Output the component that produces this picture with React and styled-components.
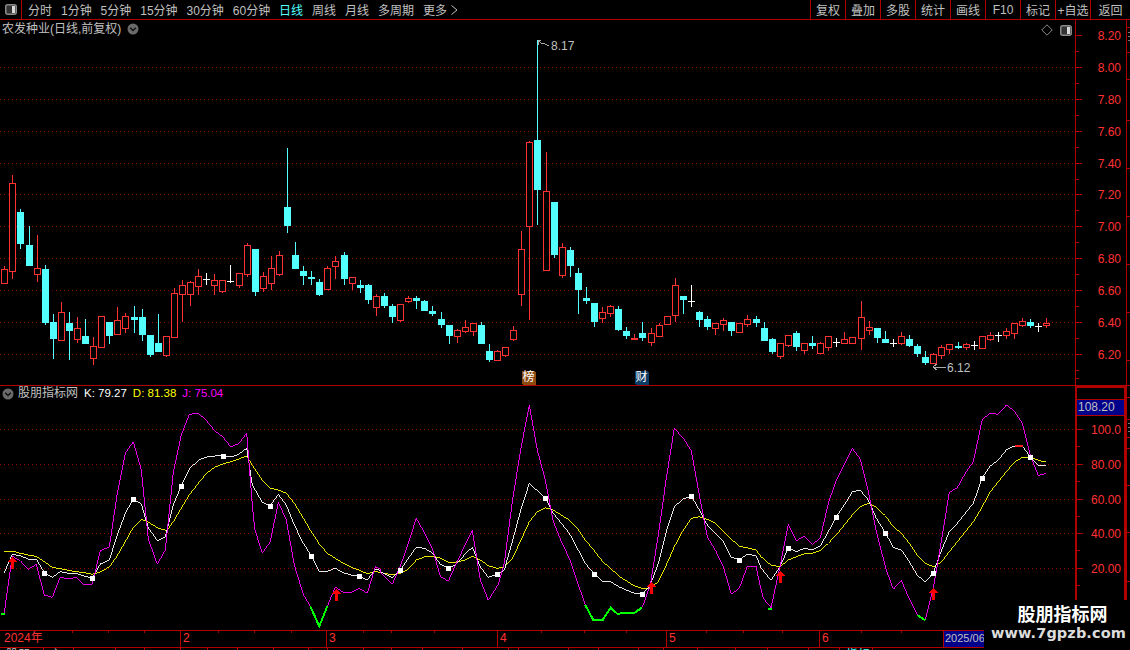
import React from 'react';
import styled, { createGlobalStyle } from 'styled-components';

const RED_LINE = '#b00000';
const RED_DOT = '#940000';
const RED_TEXT = '#ff3232';
const CYAN = '#54ffff';
const GREY = '#c0c0c0';

const Global = createGlobalStyle`
  html, body { margin: 0; padding: 0; background: #000; overflow: hidden; }
`;
const SANS = `"Liberation Sans", Arial, sans-serif`;
const CJK = `"Liberation Sans", "Noto Sans CJK SC", sans-serif`;

const Page = styled.div`
  position: relative; width: 1130px; height: 650px; overflow: hidden;
  background: #000; display: flex; flex-direction: column; font-family: ${CJK}; color: ${GREY};
`;
const TopBar = styled.header`
  height: 19px; flex: none; display: flex; align-items: stretch;
  border-bottom: 1px solid ${RED_LINE};
`;
const LayoutCell = styled.div`
  width: 21px; flex: none; display: flex; align-items: center; justify-content: center;
  border-right: 1px solid ${RED_LINE};
`;
const Tabs = styled.nav`
  flex: 1; display: flex; align-items: center; gap: 8.95px; padding-left: 6px; font-size: 12px;
`;
const Tab = styled.span`
  color: ${p => (p.$active ? CYAN : GREY)}; white-space: nowrap;
`;
const ToolCell = styled.div`
  width: 35px; flex: none; box-sizing: border-box; display: flex; align-items: center; justify-content: center;
  border-left: 1px solid ${RED_LINE}; font-size: 12px; white-space: nowrap;
  &:last-child { width: 40px; }
`;
const Row = styled.section`
  display: flex; flex: none; height: ${p => p.$h}px;
  ${p => p.$ruled && `border-top: 1px solid ${RED_LINE};`}
`;
const Plot = styled.div`
  position: relative; width: 1075px; flex: none;
  svg { display: block; }
`;
const Axis = styled.div`
  position: relative; width: 51px; flex: none; box-sizing: border-box;
  border-left: ${p => (p.$thick ? 2 : 1)}px solid ${RED_LINE};
  ${p => p.$thick && `border-right: 2px solid ${RED_LINE}; border-top: 2px solid ${RED_LINE};`}
`;
const AxisLabel = styled.span`
  position: absolute; right: ${p => (p.$thick ? 3 : 5)}px; top: ${p => p.$y}px; transform: translateY(-50%);
  font: 12px ${SANS}; color: ${RED_TEXT}; line-height: 14px;
`;
const AxisTick = styled.i`
  position: absolute; left: 0; top: ${p => p.$y}px; height: 1px;
  width: ${p => (p.$major ? 6 : 3)}px; background: ${RED_LINE};
`;
const ValueBox = styled.div`
  position: absolute; left: 0; right: 0; top: 11px; height: 17px; box-sizing: border-box;
  background: #00008a; border-top: 1px solid ${RED_LINE}; border-bottom: 1px solid ${RED_LINE};
  font: 12px/15px ${SANS}; color: ${GREY}; padding-left: 1px;
`;
const EdgeStrip = styled.div`
  position: relative; flex: 1; border-left: 1px solid ${RED_LINE};
`;
const EdgeTick = styled.i`
  position: absolute; left: 0; right: 0; top: ${p => p.$y}px; height: 1px; background: ${RED_LINE};
`;
const EdgeGlyph = styled.i`
  position: absolute; left: 1px; right: 0; top: ${p => p.$y}px; height: ${p => p.$h}px; background: #777;
`;
const PaneTitle = styled.div`
  position: absolute; left: 2px; top: 1px; display: flex; align-items: center; gap: 6px;
  font-size: 12px; line-height: 16px; color: ${GREY};
`;
const IndTitle = styled.div`
  position: absolute; left: 2px; top: 0; display: flex; align-items: center;
  font-size: 12px; line-height: 15px;
`;
const IndName = styled.span`margin: 0 6px 0 4px; color: ${GREY};`;
const IndValue = styled.span`margin-right: 6px; font-size: 11.5px; color: ${p => p.$c}; white-space: nowrap;`;
const PaneTools = styled.div`
  position: absolute; right: 3px; top: 4px; display: flex; align-items: center; gap: 7px;
`;
const Badge = styled.span`
  position: absolute; left: ${p => p.$x}px; top: 351px; width: 13px; height: 13px;
  background: ${p => p.$bg}; color: #fff; font-size: 12px; line-height: 13px; text-align: center;
  box-shadow: 1px 1px 0 ${p => p.$bg};
`;
const TimeAxis = styled.div`
  display: flex; flex: none; height: 16px; box-sizing: content-box;
  border-top: 1px solid ${RED_LINE}; border-bottom: 1px solid ${RED_LINE};
`;
const TimeSection = styled.div`
  position: relative; flex: none; width: ${p => p.$w}px; box-sizing: border-box; padding-left: ${p => (p.$first ? 4 : 2)}px;
  ${p => !p.$first && `border-left: 1px solid ${RED_LINE};`}
  font: 12px/15px ${CJK}; color: ${RED_TEXT};
`;
const TimeTick = styled.i`
  position: absolute; top: 0; left: ${p => p.$x}px; width: 1px; height: 2px; background: ${RED_LINE};
`;
const CursorDate = styled.div`
  flex: none; width: 41px; box-sizing: border-box; background: #00008a; color: ${GREY}; border-left: 1px solid ${RED_LINE};
  font: 11px/15px ${SANS}; padding-left: 1px; white-space: nowrap; overflow: hidden;
`;
const Footer = styled.div`
  flex: 1; display: flex; overflow: hidden;
`;
const FootCell = styled.div`
  flex: none; width: ${p => p.$w}px; box-sizing: border-box; border-left: 1px solid ${RED_LINE};
  padding-left: ${p => p.$pad || 6}px; font-size: 12px; line-height: 14px; margin-top: 0;
  color: ${p => p.$c || GREY}; white-space: nowrap;
  &:first-child { border-left: 0; }
`;
const Watermark = styled.aside`
  position: absolute; left: 984px; top: 600px; right: 0; bottom: 0; background: #000;
  display: flex; flex-direction: column; align-items: center; box-sizing: border-box;
`;
const MarkName = styled.div`
  font: bold 18px/26px "Noto Sans CJK SC", sans-serif; color: #fff; padding-left: 11px; height: 25px;
`;
const MarkUrl = styled.div`
  font: bold 14.5px/17px "DejaVu Sans", sans-serif; color: #dcdcdc; letter-spacing: 0.1px; white-space: nowrap;
  padding-left: 3px;
`;

/* ---------- drawn icons ---------- */
const WindowIcon = () => (
  <svg width="12" height="11" viewBox="0 0 12 11">
    <rect x="0.75" y="0.75" width="10.5" height="9.5" rx="2" fill="#333" stroke="#8a8a8a" strokeWidth="1.5" />
    <rect x="7" y="2" width="3" height="7" fill="#d8d8d8" />
  </svg>
);
const Chevron = () => (
  <svg width="12" height="12" viewBox="0 0 12 12">
    <circle cx="6" cy="6" r="5.5" fill="#6a6a6a" />
    <path d="M3.2 4.8 L6 7.6 L8.8 4.8" fill="none" stroke="#111" strokeWidth="1.4" />
  </svg>
);
const Diamond = () => (
  <svg width="12" height="12" viewBox="0 0 12 12">
    <path d="M6 .8 L11.2 6 L6 11.2 L.8 6 Z" fill="none" stroke="#8a8a8a" />
  </svg>
);
const MoreArrow = () => (
  <svg width="7" height="10" viewBox="0 0 7 10" style={{ marginLeft: 4 }}>
    <path d="M.5 .5 L6 5 L.5 9.5" fill="none" stroke={GREY} />
  </svg>
);

/* ---------- price data: colour, high, body top, body bottom, low (zoom px; 3x + section origin) ---------- */
const sections = [
  [160, `r318,328,368,372 r45,70,334,357 c148,156,252,267 c198,255,318,318 r225,325,341,365 c316,327,489,495 c462,486,537,597 r427,457,539,539 c457,489,513,600 r472,505,536,549 c477,528,552,552 r531,559,593,615 r469,469,560,560 c486,486,528,552 r441,481,521,521 r459,469,503,519 c438,471,480,519 c447,471,525,543 c525,525,585,591 c462,549,576,576 r528,529,584,591 r384,400,530,530 r361,376,401,487 r363,367,401,438 r327,349,377,405 w339,357,357,372 r342,361,374,405 r361,361,392,399 w315,362,362,366 r340,340,374,384 r250,256,341,351 c267,267,396,408 r336,349,383,396 r288,325,368,390 r274,286,341,348`],
  [130, `c54,231,288,309 c336,375,417,417 c408,423,438,465 c423,441,447,465 c447,456,495,498 r408,415,476,480 r378,394,407,447 c366,375,447,465 r442,442,458,480 c450,465,474,489 c462,465,510,522 r492,499,530,558 c489,498,528,534 c522,528,561,579 r523,523,569,576 r498,504,512,519 c498,504,513,537 c510,513,543,543 c528,543,552,558 c546,567,585,594 c585,585,618,642 r597,601,617,639 r570,592,602,609 r579,580,602,618 c576,585,642,642 c642,663,690,696 r660,664,689,689 r652,652,674,681 r588,601,627,633 r303,358,491,528 r33,37,287,570 c-270,30,180,285 r66,184,419,419 c216,216,375,384 r340,351,435,445`],
  [260, `c-39,-30,18,51 c24,39,90,162 c81,114,123,132 c129,129,186,201 r141,157,174,189 r135,139,158,171 c138,147,210,213 c201,213,228,237 r222,235,238,238 c186,219,234,243 r204,220,245,258 r189,196,227,227 r168,169,191,195 r54,76,164,186 c108,108,120,162 w75,124,124,138 c153,156,180,201 c168,177,201,210 r190,190,203,225 r174,180,191,213 c186,186,213,228 r189,190,216,219 r165,178,191,201 c168,177,189,201 c186,204,243,243 c234,237,276,282 r250,250,287,297 r226,226,254,261 c213,219,261,273 r250,250,269,282 c228,249,258,267 r246,250,278,282 r229,229,260,273 w234,246,246,258`],
  [290, `r127,148,160,160 r140,140,160,160 r33,82,145,181 r93,112,121,136 c114,114,144,159 c124,148,159,159 w148,158,158,168 r126,139,160,166 c136,148,167,171 c162,168,193,200 c184,201,218,224 r190,193,220,222 r166,170,196,206 r162,163,178,192 c155,169,173,178 r158,163,171,180 w154,164,164,176 r139,139,173,173 r127,136,147,152 w125,134,134,152 r115,122,135,147 r99,100,130,146 r85,92,106,110 c88,97,109,114 w98,108,108,122 r85,99,106,114`],
];
const candles = sections.flatMap(([oy, s]) =>
  s.split(' ').map(t => {
    const [hi, top, bot, lo] = t.slice(1).split(',').map(n => Math.round(oy + Number(n) / 3));
    return { k: t[0], hi, top, bot, lo };
  })
).map((c, i) => ({ ...c, x: Math.round(4.3 + i * 8.078) }));

const COLORS = { r: RED_TEXT, c: CYAN, w: '#fff' };
const Candle = ({ c }) => {
  const col = COLORS[c.k];
  const cx = c.x + 0.5;
  if (c.k === 'w') {
    return (
      <g stroke={col}>
        <line x1={cx} x2={cx} y1={c.hi} y2={c.lo + 1} />
        <line x1={c.x - 3} x2={c.x + 4} y1={c.top + 0.5} y2={c.top + 0.5} />
      </g>
    );
  }
  const h = Math.max(c.bot - c.top, 1);
  return (
    <g>
      {c.hi < c.top && <line x1={cx} x2={cx} y1={c.hi} y2={c.top} stroke={col} />}
      {c.lo > c.bot && <line x1={cx} x2={cx} y1={c.bot} y2={c.lo} stroke={col} />}
      {c.k === 'c'
        ? <rect x={c.x - 3} y={c.top} width="7" height={h} fill={col} />
        : <rect x={c.x - 2.5} y={c.top + 0.5} width="6" height={h} fill="#000" stroke={col} />}
    </g>
  );
};

/* ---------- KDJ data: zoom px per crop ---------- */
const zp = (s, ox) => s.trim().split(/\s+/).map(t => {
  const [x, y] = t.split(',').map(Number);
  return `${(ox + x / 3).toFixed(1)},${(385 + y / 3).toFixed(1)}`;
});
const J = [
  ...zp(`13,683 19,640 37,514 61,527 85,553 109,538 133,630 157,637 181,576 205,582 229,577 253,600 277,597 301,497 328,486 352,325 376,205 400,170 424,255 445,462 472,538 496,495 520,262 544,150 568,88 596,85 620,108 644,137 668,155 692,185 716,176 740,145 757,360 764,432 787,505 811,470 835,352 859,405 883,540 910,628 931,664 958,724 982,664 1006,606 1030,622 1054,622 1078,610 1102,625 1126,545 1140,552`, 0),
  ...zp(`0,560 37,598 61,544 85,475 109,400 133,442 157,490 181,574 205,589 229,535 253,485 277,436 301,585 325,646 355,598 373,535 397,350 421,200 448,60 472,195 496,285 520,410 544,470 568,520 592,590 616,660 640,705 668,705 692,668 712,686 740,684 764,683 787,667 811,600 835,450 859,280 883,130 910,160 934,197 958,330 982,455 1006,495 1030,545 1054,627 1078,610 1102,544 1128,544 1140,600`, 380),
  ...zp(`0,600 10,640 33,668 60,545 85,418 109,467 133,454 157,478 181,460 205,355 229,285 253,238 277,190 301,222 325,320 349,440 379,555 400,613 424,586 448,642 472,690 496,706 520,610 544,470 568,322 592,308 616,265 640,230 667,103 691,85 715,88 739,60 763,78 787,115 811,212 835,272 857,265`, 760),
].join(' ');
const K = [
  ...zp(`13,563 37,508 61,512 85,522 109,522 133,563 157,577 181,560 205,565 229,565 253,574 277,579 301,537 328,525 352,450 376,385 400,342 424,357 445,428 472,467 496,456 520,360 544,302 568,252 596,225 620,216 644,213 668,212 692,216 716,208 740,190 757,300 787,352 811,362 835,328 859,360 883,420 910,475 934,512 958,559 982,559 1006,550 1030,563 1054,570 1078,572 1102,586 1126,552 1140,556`, 0),
  ...zp(`0,560 37,578 61,555 85,520 109,487 133,490 157,503 181,538 205,549 229,538 253,510 277,487 301,545 325,577 352,567 373,555 397,470 421,380 448,295 472,317 496,338 520,385 544,415 568,445 592,490 616,535 643,567 668,590 692,590 716,605 740,616 764,625 787,627 811,600 835,535 859,440 883,365 910,342 934,333 958,375 982,420 1006,445 1030,470 1054,517 1078,524 1102,508 1128,512 1140,540`, 380),
  ...zp(`0,545 33,586 60,545 85,488 109,500 133,490 157,495 181,483 205,440 229,396 253,360 277,320 301,316 325,345 349,400 376,443 400,487 424,495 448,530 472,570 496,592 520,563 544,497 568,440 592,415 616,385 640,355 667,278 691,243 715,225 739,195 763,183 787,183 811,215 835,242 857,242`, 760),
].join(' ');
const D = [
  ...zp(`13,498 43,499 61,505 85,510 109,514 133,530 157,547 181,551 205,556 229,560 253,563 277,568 301,561 328,546 352,512 376,470 400,427 424,403 445,411 472,428 500,437 520,410 544,370 568,330 596,293 620,265 644,247 668,237 692,230 716,222 740,213 757,240 787,285 811,310 835,315 859,325 883,355 910,400 934,440 958,477 982,505 1006,520 1030,535 1054,547 1078,556 1102,566 1126,560 1140,562`, 0),
  ...zp(`0,562 37,570 61,565 85,553 109,525 133,516 157,514 181,519 205,532 229,531 253,526 277,514 301,525 325,542 352,550 373,547 397,520 421,470 448,410 472,380 496,368 520,375 544,390 568,405 592,430 616,465 643,497 668,530 692,550 716,573 740,588 764,603 787,610 811,610 835,590 859,540 883,485 910,435 934,400 958,395 982,403 1006,415 1030,440 1054,462 1078,484 1102,488 1128,495 1140,510`, 380),
  ...zp(`0,512 33,541 60,545 85,525 109,515 133,507 157,505 181,497 205,475 229,450 253,420 277,390 301,365 325,355 349,367 376,392 400,425 424,445 448,475 472,510 496,535 520,545 544,532 568,500 592,470 616,440 640,410 667,365 691,320 715,290 739,260 763,232 787,217 811,217 835,226 857,231`, 760),
].join(' ');
const greens = [
  zp(`2,687 14,686`, 0),
  zp(`931,664 958,724 982,664`, 0),
  zp(`616,660 640,705 668,705 692,668 712,686 740,684 764,683 787,667`, 380),
  zp(`24,672 36,672`, 760),
  zp(`472,690 496,706`, 760),
].map(a => a.join(' '));
const squares = [
  ...[[133,563],[276,579],[400,342],[544,302],[668,212],[811,362],[934,512],[1078,572]].map(([x,y]) => [x/3, 385+y/3]),
  ...[[61,555],[205,549],[352,567],[496,338],[643,567],[787,627],[934,333],[1078,524]].map(([x,y]) => [380+x/3, 385+y/3]),
  ...[[85,488],[229,396],[376,443],[519,563],[667,278],[811,215]].map(([x,y]) => [760+x/3, 385+y/3]),
];
const arrows = [[12.5,557],[336.5,589],[651.5,582],[780.5,571],[933.5,588]];

const priceLevels = ['8.20','8.00','7.80','7.60','7.40','7.20','7.00','6.80','6.60','6.40','6.20'];
const priceY = [35,67,99,131,163,194,226,258,290,322,354];
const kdjLevels = [['100.0',429],['80.00',464],['60.00',499],['40.00',533],['20.00',568]];

const tools = ['复权','叠加','多股','统计','画线','F10','标记','+自选','返回'];
const tabs = ['分时','1分钟','5分钟','15分钟','30分钟','60分钟','日线','周线','月线','多周期'];
const months = [
  ['2024年', 180, [72,108,144]], ['2', 146, [37,73,110]], ['3', 171, [36,64,107]],
  ['4', 169, [43,86,128]], ['5', 153, [39,76,115]], ['6', 124, [41,81]],
];
const footCells = [[43,'股朋',GREY],[30,'主',GREY],[42],[29],[36],[27],[30],[36],[35],[19],[36],[28],[31],[40],[46],[10],[50],[30],[40],[25],[34],[38],[32],[41],[31,'',GREY],[33,'指标',CYAN],[258]];

const App = () => (
  <Page>
    <Global />
    <TopBar>
      <LayoutCell><WindowIcon /></LayoutCell>
      <Tabs>
        {tabs.map(t => <Tab key={t} $active={t === '日线'}>{t}</Tab>)}
        <Tab>更多<MoreArrow /></Tab>
      </Tabs>
      {tools.map(t => <ToolCell key={t}>{t}</ToolCell>)}
    </TopBar>

    <Row $h={365}>
      <Plot>
        <svg width="1075" height="365" viewBox="0 20 1075 365" shapeRendering="crispEdges">
          {priceY.slice(1).map(y => (
            <line key={y} x1="0" x2="1075" y1={y + 0.5} y2={y + 0.5} stroke={RED_DOT} strokeDasharray="1 3" shapeRendering="auto" />
          ))}
          {candles.map((c, i) => <Candle key={i} c={c} />)}
          <g stroke="#aaa" fill="none">
            <path d="M538 45 V40 H541 M538 40 L541 43 M541 43 L545 44 L549 46" />
            <path d="M933 367 H946 M933 367 L937 364 M933 367 L937 370" />
          </g>
          <g fontFamily="Liberation Sans" fontSize="12" fill={GREY} shapeRendering="auto">
            <text x="551" y="50">8.17</text>
            <text x="947" y="372">6.12</text>
          </g>
        </svg>
        <PaneTitle>
          <span>农发种业(日线,前复权)</span>
          <Chevron />
        </PaneTitle>
        <PaneTools>
          <Diamond />
          <WindowIcon />
        </PaneTools>
        <Badge $x={522} $bg="#8a4a10">榜</Badge>
        <Badge $x={635} $bg="#0c3c64">财</Badge>
      </Plot>
      <Axis>
        {priceY.map((y, i) => (
          <React.Fragment key={y}>
            <AxisTick $major $y={y - 20} />
            <AxisTick $y={y - 4} />
            <AxisLabel $y={y - 19}>{priceLevels[i]}</AxisLabel>
          </React.Fragment>
        ))}
        <AxisTick $y={358} />
      </Axis>
      <EdgeStrip>
        {[7, 32, 59, 100, 148, 196, 244, 292, 340].map(y => <EdgeTick key={y} $y={y} />)}
        <EdgeGlyph $y={12} $h={1} />
        <EdgeGlyph $y={16} $h={1} />
        <EdgeGlyph $y={20} $h={1} />
      </EdgeStrip>
    </Row>

    <Row $h={244} $ruled>
      <Plot>
        <svg width="1075" height="244" viewBox="0 386 1075 244" shapeRendering="crispEdges">
          {kdjLevels.map(([, y]) => (
            <line key={y} x1="0" x2="1075" y1={y + 0.5} y2={y + 0.5} stroke={RED_DOT} strokeDasharray="1 3" shapeRendering="auto" />
          ))}
          <polyline points={D} fill="none" stroke="#ffff00" strokeWidth="0.9" />
          <polyline points={K} fill="none" stroke="#fff" strokeWidth="0.9" />
          <polyline points={J} fill="none" stroke="#ff00ff" strokeWidth="0.9" />
          {greens.map((p, i) => <polyline key={i} points={p} fill="none" stroke="#00ff00" strokeWidth="2" />)}
          <line x1="1015" x2="1023" y1="446" y2="446" stroke="#ff2020" strokeWidth="2" />
          {squares.map(([x, y], i) => (
            <rect key={i} x={Math.round(x - 2)} y={Math.round(y - 2)} width="5" height="5" fill="#fff" />
          ))}
          {arrows.map(([x, y], i) => (
            <path key={i} fill="#ff0000"
              d={`M${x} ${y} L${x + 4.5} ${y + 5} H${x + 1.5} V${y + 12} H${x - 1.5} V${y + 5} H${x - 4.5} Z`} />
          ))}
        </svg>
        <IndTitle>
          <Chevron />
          <IndName>股朋指标网</IndName>
          <IndValue $c="#fff">K: 79.27</IndValue>
          <IndValue $c="#ffff00">D: 81.38</IndValue>
          <IndValue $c="#ff00ff">J: 75.04</IndValue>
        </IndTitle>
      </Plot>
      <Axis $thick>
        <ValueBox>108.20</ValueBox>
        {kdjLevels.map(([l, y]) => (
          <React.Fragment key={y}>
            <AxisTick $major $y={y - 388} />
            <AxisTick $y={y - 371} />
            <AxisLabel $thick $y={y - 387}>{l}</AxisLabel>
          </React.Fragment>
        ))}
      </Axis>
      <EdgeStrip>
        {[11, 33, 51, 62, 99, 146, 195].map(y => <EdgeTick key={y} $y={y} />)}
        <EdgeGlyph $y={37} $h={1} />
        <EdgeGlyph $y={41} $h={1} />
        <EdgeGlyph $y={45} $h={1} />
      </EdgeStrip>
    </Row>

    <TimeAxis>
      {months.map(([label, w, ticks], i) => (
        <TimeSection key={label} $w={w} $first={i === 0}>
          {label}
          {ticks.map(x => <TimeTick key={x} $x={x} />)}
        </TimeSection>
      ))}
      <CursorDate>2025/06</CursorDate>
    </TimeAxis>
    <Footer>
      {footCells.map(([w, t, c], i) => <FootCell key={i} $w={w} $c={c}>{t}</FootCell>)}
    </Footer>

    <Watermark>
      <MarkName>股朋指标网</MarkName>
      <MarkUrl>www.7gpzb.com</MarkUrl>
    </Watermark>
  </Page>
);

export default App;
